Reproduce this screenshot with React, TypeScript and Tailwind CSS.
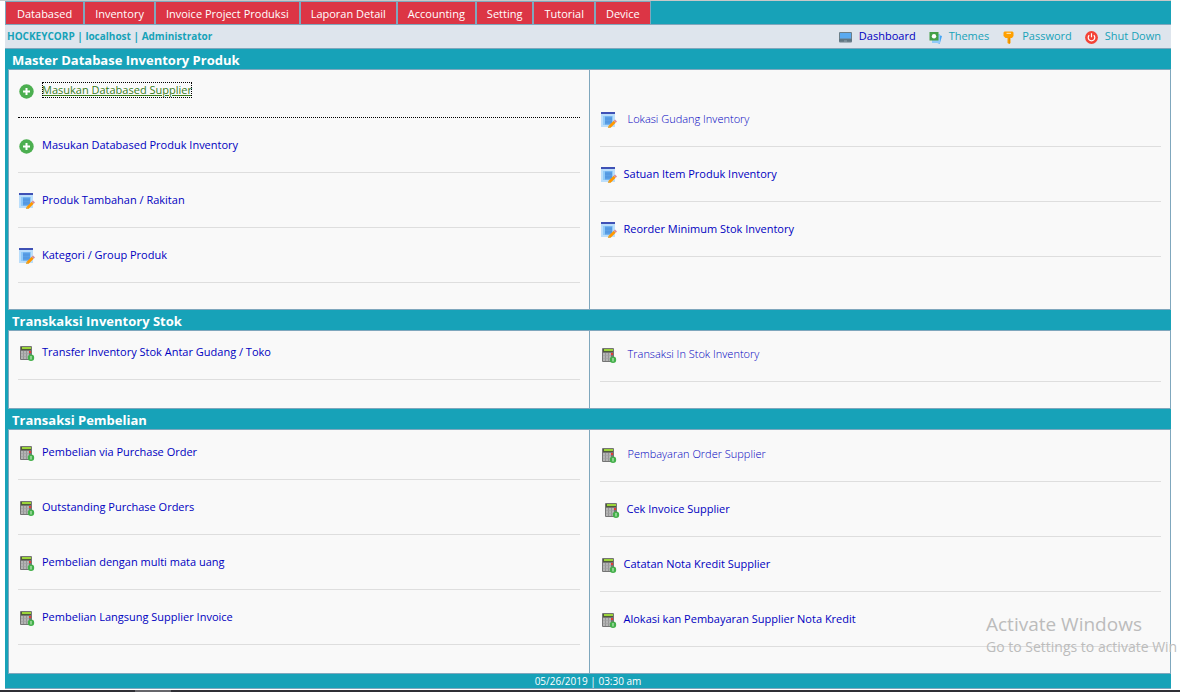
import type { ReactNode } from "react";

type IconName = "add" | "form" | "calc";
type Item = { label: string; icon: IconName; tone?: "light" | "focus" | "shifted" };
type Section = { title: string; left: Item[]; right: Item[]; leftPad: string; rightPad: string };

const tabs = [
  "Databased",
  "Inventory",
  "Invoice Project Produksi",
  "Laporan Detail",
  "Accounting",
  "Setting",
  "Tutorial",
  "Device",
];

const sections: Section[] = [
  {
    title: "Master Database Inventory Produk",
    leftPad: "pt-[11px]",
    rightPad: "pt-10",
    left: [
      { label: "Masukan Databased Supplier", icon: "add", tone: "focus" },
      { label: "Masukan Databased Produk Inventory", icon: "add" },
      { label: "Produk Tambahan / Rakitan", icon: "form" },
      { label: "Kategori / Group Produk", icon: "form" },
    ],
    right: [
      { label: "Lokasi Gudang Inventory", icon: "form", tone: "light" },
      { label: "Satuan Item Produk Inventory", icon: "form" },
      { label: "Reorder Minimum Stok Inventory", icon: "form" },
    ],
  },
  {
    title: "Transkaksi Inventory Stok",
    leftPad: "pt-3",
    rightPad: "pt-3.5",
    left: [{ label: "Transfer Inventory Stok Antar Gudang / Toko", icon: "calc" }],
    right: [{ label: "Transaksi In Stok Inventory", icon: "calc", tone: "light" }],
  },
  {
    title: "Transaksi Pembelian",
    leftPad: "pt-[13px]",
    rightPad: "pt-[15px]",
    left: [
      { label: "Pembelian via Purchase Order", icon: "calc" },
      { label: "Outstanding Purchase Orders", icon: "calc" },
      { label: "Pembelian dengan multi mata uang", icon: "calc" },
      { label: "Pembelian Langsung Supplier Invoice", icon: "calc" },
    ],
    right: [
      { label: "Pembayaran Order Supplier", icon: "calc", tone: "light" },
      { label: "Cek Invoice Supplier", icon: "calc", tone: "shifted" },
      { label: "Catatan Nota Kredit Supplier", icon: "calc" },
      { label: "Alokasi kan Pembayaran Supplier Nota Kredit", icon: "calc" },
    ],
  },
];

function Svg({ children }: { children: ReactNode }) {
  return (
    <svg viewBox="0 0 16 16" className="size-4 shrink-0" aria-hidden="true">
      {children}
    </svg>
  );
}

function AddIcon() {
  return (
    <Svg>
      <circle cx="7.5" cy="8.5" r="7.2" fill="#4caf50" />
      <path d="M6.500 5h2v2.500H11v2H8.500V12h-2V9.500H4v-2h2.500z" fill="#fff" />
    </Svg>
  );
}

function FormIcon() {
  return (
    <Svg>
      <rect x="0" y="1" width="14" height="14" fill="#bbdefb" />
      <rect x="0" y="0" width="14" height="2" fill="#3f51b5" />
      <rect x="2" y="4" width="10" height="9" fill="#90caf9" />
      <rect x="4" y="4.500" width="7" height="8" fill="#5a9fe6" />
      <path d="M4 7h7M4 10h7" stroke="#4a8fd8" strokeWidth="0.600" />
      <path d="M7.700 13.800l5-5 2 2-5 5-2.800.2z" fill="#ff9800" />
      <path d="M12.700 8.800l1.300-1.300 2 2-1.300 1.300z" fill="#d98a95" />
      <path d="M7.700 13.800l2 2-2.800.2z" fill="#d9b25c" />
    </Svg>
  );
}

function CalcIcon() {
  return (
    <Svg>
      <rect x="1" y="1" width="12" height="14" rx="1" fill="#757575" />
      <rect x="2" y="2" width="10" height="3" fill="#4e5a3a" />
      <rect x="3" y="2" width="9" height="2" fill="#9bd43a" />
      <rect x="2" y="6" width="8" height="8" fill="#b4b4b4" />
      <path d="M4.500 6v8M7.500 6v8" stroke="#959595" strokeWidth="1" />
      <path d="M2 8.500h8M2 11.500h8" stroke="#a0a0a0" strokeWidth="0.600" />
      <rect x="10" y="6" width="2" height="2" fill="#e53935" />
      <circle cx="12" cy="12.700" r="3.200" fill="#43b04a" />
      <path d="M12 11v3.400" stroke="#c8edc8" strokeWidth="1.100" />
    </Svg>
  );
}

function DashboardIcon() {
  return (
    <Svg>
      <rect x="1" y="3" width="13" height="10.500" rx="1" fill="#6b7f8a" />
      <rect x="2" y="4" width="11" height="5.500" fill="#5aaaf0" />
      <path d="M1 10.500h13v1H1z" fill="#546e7a" />
      <path d="M6 11.500h3v1H6z" fill="#90a4ae" />
    </Svg>
  );
}

function ThemesIcon() {
  return (
    <Svg>
      <rect x="6" y="6" width="7" height="8" transform="rotate(16 10 10)" fill="#42a5f5" />
      <rect x="4" y="5" width="8" height="9" fill="#90caf9" />
      <rect x="1.500" y="3" width="9" height="8.500" fill="#43a047" />
      <circle cx="6" cy="7.200" r="2.200" fill="#fff" />
    </Svg>
  );
}

function KeyIcon() {
  return (
    <Svg>
      <path d="M3.500 2.500h8l1 1V7l-1.500 2H9.500v5l-1.200 1-1.800-1V9H4.500L2.500 7V3.500z" fill="#ffa000" />
      <path d="M5.500 3.800h4.500V5H5.500z" fill="#ffe0a3" />
      <path d="M8.300 8.500v6" stroke="#d68400" strokeWidth="0.800" />
    </Svg>
  );
}

function PowerIcon() {
  return (
    <Svg>
      <circle cx="7.500" cy="8.500" r="6.400" fill="#f44336" />
      <path d="M5.200 6.200a3.300 3.300 0 1 0 4.600 0M7.500 4.300v4" stroke="#fff" strokeWidth="1.200" fill="none" />
    </Svg>
  );
}

const itemIcons = { add: <AddIcon />, form: <FormIcon />, calc: <CalcIcon /> };

const tools = [
  { label: "Dashboard", icon: <DashboardIcon />, color: "text-[#0000c0]" },
  { label: "Themes", icon: <ThemesIcon />, color: "text-[#17a2b8]" },
  { label: "Password", icon: <KeyIcon />, color: "text-[#17a2b8]" },
  { label: "Shut Down", icon: <PowerIcon />, color: "text-[#17a2b8]" },
];

function MenuItem({ item }: { item: Item }) {
  const { tone } = item;
  const row = tone === "light" ? "gap-[11px]" : "gap-[7px]";
  const text =
    tone === "focus"
      ? "text-[#3a7d1a] underline outline-1 -outline-offset-1 outline-dotted outline-black"
      : tone === "light"
        ? "text-[#0000c0] font-light"
        : "text-[#0000c0]";
  return (
    <li className="flex flex-col">
      <a href="#" className={`flex h-5 items-center ${row} ${tone === "shifted" ? "pl-1" : "pl-px"}`}>
        {itemIcons[item.icon]}
        <span className={`mb-[3px] leading-4 whitespace-nowrap ${text}`}>{item.label}</span>
      </a>
      <hr className={`mt-4 border-t ${tone === "focus" ? "border-dotted border-black" : "border-[#dedede]"}`} />
    </li>
  );
}

function Column({ items, pad }: { items: Item[]; pad: string }) {
  return (
    <ul className={`flex flex-1 flex-col gap-[18px] pr-[9px] pb-[26px] ${pad}`}>
      {items.map((item) => (
        <MenuItem key={item.label} item={item} />
      ))}
    </ul>
  );
}

export default function App() {
  return (
    <div className="relative overflow-hidden bg-white font-['Open_Sans','Noto_Sans',sans-serif] text-[11px]">
      <div className="mr-[9px] border-t border-[#c8c8c8] pl-[5px]">
        <header>
          <nav className="flex h-6 border-b border-[#7fa7bd] bg-[#17a2b8]">
            {tabs.map((tab) => (
              <button
                key={tab}
                type="button"
                className="h-6 border border-[#7fa7bd] bg-[#dc3545] px-2.5 pt-0.5 whitespace-nowrap text-white first:px-[11px]"
              >
                {tab}
              </button>
            ))}
          </nav>
          <div className="flex h-6 items-center justify-between border-b border-[#7fa7bd] bg-[#dee5ed] pr-2.5 pl-0.5">
            <strong className="text-[10px] font-bold text-[#17a2b8]">
              HOCKEYCORP | localhost | Administrator
            </strong>
            <div className="flex gap-3">
              {tools.map((tool) => (
                <a key={tool.label} href="#" className={`flex items-center gap-[5px] ${tool.color}`}>
                  {tool.icon}
                  {tool.label}
                </a>
              ))}
            </div>
          </div>
        </header>

        <main className="bg-[#17a2b8] pl-[3px]">
          {sections.map((section) => (
            <section key={section.title}>
              <h2 className="h-5 pl-1 text-[13px] leading-[22px] font-bold text-white">{section.title}</h2>
              <div className="flex divide-x divide-[#7fa7bd] border border-[#7fa7bd] bg-[#f9f9f9]">
                <Column items={section.left} pad={`pl-[9px] ${section.leftPad}`} />
                <Column items={section.right} pad={`pl-2.5 ${section.rightPad}`} />
              </div>
            </section>
          ))}
        </main>
        <footer className="h-[15px] border-b border-[#7fa7bd] bg-[#17a2b8] text-center text-[10px] leading-[14px] text-white">
          05/26/2019 | 03:30 am
        </footer>
      </div>
      <div className="mt-px flex h-0.5 bg-[#2f2f35]">
        <div className="ml-[135px] w-9 bg-[#66666b]" />
      </div>
      <div className="pointer-events-none absolute top-[612px] left-[986px] whitespace-nowrap text-[#bcbcbc]">
        <p className="text-[19px] leading-6">Activate Windows</p>
        <p className="text-sm leading-[22px]">Go to Settings to activate Win</p>
      </div>
    </div>
  );
}
